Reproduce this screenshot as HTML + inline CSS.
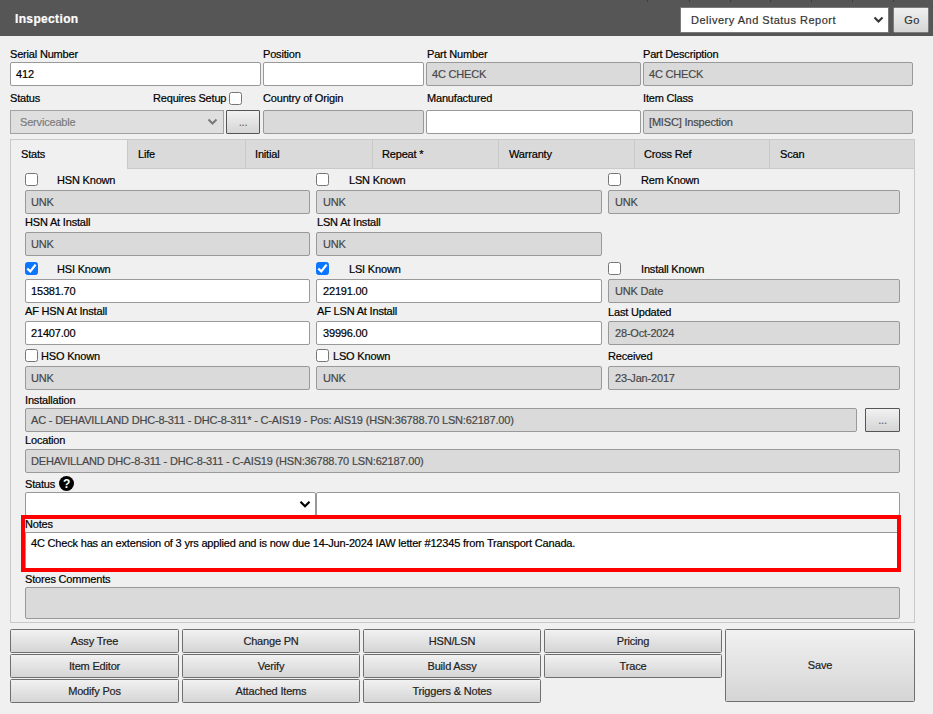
<!DOCTYPE html>
<html><head><meta charset="utf-8">
<style>
*{box-sizing:border-box;margin:0;padding:0}
html,body{-webkit-text-stroke:0.2px;width:933px;height:714px;overflow:hidden;background:#f0f0f0;font-family:"Liberation Sans",sans-serif;font-size:11px;color:#000;letter-spacing:-0.18px}
.a{position:absolute}
#hdr{left:0;top:0;width:933px;height:36px;background:#565656}
.tl{position:absolute;top:0;width:1px;height:2px;background:#3c3c3c}
.l{position:absolute;line-height:13px;white-space:pre;color:#000}
.in{position:absolute;height:24px;border:1px solid #999;border-radius:2px;background:#fff;line-height:22px;padding-left:5px;white-space:pre;color:#000;overflow:hidden}
.dis{background:#dadada;color:#474747}
.cb{position:absolute;width:13px;height:13px;border:1px solid #767676;border-radius:2.5px;background:#fff}
.cbc{background:#0a75ff;border-color:#0a75ff}
.cbc svg{position:absolute;left:0;top:0}
.tab{position:absolute;top:140px;height:28px;line-height:28px;padding-left:10px;border-left:1px solid #c9c9c9;white-space:pre}
.btn{position:absolute;height:24px;border:1px solid #6f6f6f;border-radius:1.5px;background:linear-gradient(#f1f1f1,#d5d5d5);text-align:center;line-height:22px;color:#222;white-space:pre}
</style></head><body>
<div id="hdr" class="a">
  <div class="l" style="left:15px;top:12px;font-weight:bold;font-size:12px;color:#fdfdff;letter-spacing:0.35px;line-height:15px">Inspection</div>
  <div class="tl" style="left:647px"></div><div class="tl" style="left:689px"></div><div class="tl" style="left:730px"></div><div class="tl" style="left:770px"></div><div class="tl" style="left:811px"></div><div class="tl" style="left:852px"></div><div class="tl" style="left:893px"></div>
  <div class="a" style="left:680px;top:7px;width:209px;height:26px;background:#fff;border:1px solid #7a7a7a;font-size:11px;line-height:24px;padding-left:10px;color:#333;letter-spacing:0.5px">Delivery And Status Report</div>
  <svg class="a" style="left:873px;top:16px" width="11" height="8" viewBox="0 0 11 8"><path d="M1.5 1.5 L5.5 5.5 L9.5 1.5" fill="none" stroke="#333" stroke-width="2"/></svg>
  <div class="btn" style="left:893px;top:7px;width:36px;height:26px;line-height:25px;font-size:11px;color:#333;letter-spacing:0.5px;border-color:#7d7d7d;padding-left:2px">Go</div>
</div>

<!-- row 1 -->
<div class="l" style="left:10px;top:48px">Serial Number</div>
<div class="l" style="left:263px;top:48px">Position</div>
<div class="l" style="left:427px;top:48px">Part Number</div>
<div class="l" style="left:643px;top:48px">Part Description</div>
<div class="in" style="left:10px;top:62px;width:251px">412</div>
<div class="in" style="left:263px;top:62px;width:161px"></div>
<div class="in dis" style="left:426px;top:62px;width:215px">4C CHECK</div>
<div class="in dis" style="left:643px;top:62px;width:270px">4C CHECK</div>

<!-- row 2 -->
<div class="l" style="left:10px;top:92px">Status</div>
<div class="l" style="left:153px;top:92px">Requires Setup</div>
<div class="cb" style="left:229px;top:92px"></div>
<div class="l" style="left:263px;top:92px">Country of Origin</div>
<div class="l" style="left:427px;top:92px">Manufactured</div>
<div class="l" style="left:643px;top:92px">Item Class</div>
<div class="in dis" style="left:10px;top:110px;width:214px;color:#7c7c7c;padding-left:9px;border-radius:0;background:#dfdfdf;border-color:#a3a3a3">Serviceable</div>
<svg class="a" style="left:207px;top:118px" width="11" height="8" viewBox="0 0 11 8"><path d="M1.5 1.5 L5.5 5.5 L9.5 1.5" fill="none" stroke="#777" stroke-width="2"/></svg>
<div class="btn" style="left:226px;top:110px;width:34px;color:#666;border-color:#555;border-radius:1px">...</div>
<div class="in dis" style="left:263px;top:110px;width:161px"></div>
<div class="in" style="left:426px;top:110px;width:215px"></div>
<div class="in dis" style="left:643px;top:110px;width:270px">[MISC] Inspection</div>

<!-- tabs -->
<div class="a" style="left:10px;top:139px;width:905px;height:484px;border:1px solid #c9c9c9;background:#f0f0f0"></div>
<div class="a" style="left:127px;top:140px;width:787px;height:29px;background:#dadada;border-bottom:1px solid #c9c9c9"></div>
<div class="tab" style="left:10px;border-left:none;padding-left:11px">Stats</div>
<div class="tab" style="left:127px">Life</div>
<div class="tab" style="left:245px;padding-left:9px">Initial</div>
<div class="tab" style="left:372px;padding-left:9px">Repeat *</div>
<div class="tab" style="left:498px">Warranty</div>
<div class="tab" style="left:634px;padding-left:9px">Cross Ref</div>
<div class="tab" style="left:769px">Scan</div>

<!-- content row A -->
<div class="cb" style="left:25px;top:173px"></div><div class="l" style="left:57px;top:174px">HSN Known</div>
<div class="cb" style="left:316px;top:173px"></div><div class="l" style="left:349px;top:174px">LSN Known</div>
<div class="cb" style="left:608px;top:173px"></div><div class="l" style="left:641px;top:174px">Rem Known</div>
<div class="in dis" style="left:25px;top:190px;width:285px">UNK</div>
<div class="in dis" style="left:316px;top:190px;width:286px;padding-left:6px">UNK</div>
<div class="in dis" style="left:608px;top:190px;width:292px;padding-left:6px">UNK</div>

<div class="l" style="left:25px;top:216px">HSN At Install</div>
<div class="l" style="left:317px;top:216px">LSN At Install</div>
<div class="in dis" style="left:25px;top:232px;width:285px">UNK</div>
<div class="in dis" style="left:316px;top:232px;width:286px;padding-left:6px">UNK</div>

<div class="cb cbc" style="left:25px;top:262px"><svg width="11" height="11" viewBox="0 0 11 11"><path d="M1.3 5.6 L4.3 8.4 L9.6 1.6" fill="none" stroke="#fff" stroke-width="2.3"/></svg></div><div class="l" style="left:57px;top:263px">HSI Known</div>
<div class="cb cbc" style="left:316px;top:262px"><svg width="11" height="11" viewBox="0 0 11 11"><path d="M1.3 5.6 L4.3 8.4 L9.6 1.6" fill="none" stroke="#fff" stroke-width="2.3"/></svg></div><div class="l" style="left:349px;top:263px">LSI Known</div>
<div class="cb" style="left:608px;top:262px"></div><div class="l" style="left:641px;top:263px">Install Known</div>
<div class="in" style="left:25px;top:279px;width:285px">15381.70</div>
<div class="in" style="left:316px;top:279px;width:286px;padding-left:6px">22191.00</div>
<div class="in dis" style="left:608px;top:279px;width:292px;padding-left:6px">UNK Date</div>

<div class="l" style="left:25px;top:305px">AF HSN At Install</div>
<div class="l" style="left:317px;top:305px">AF LSN At Install</div>
<div class="l" style="left:608px;top:306px">Last Updated</div>
<div class="in" style="left:25px;top:321px;width:285px">21407.00</div>
<div class="in" style="left:316px;top:321px;width:286px;padding-left:6px">39996.00</div>
<div class="in dis" style="left:608px;top:321px;width:292px;padding-left:6px">28-Oct-2024</div>

<div class="cb" style="left:25px;top:349px"></div><div class="l" style="left:41px;top:350px">HSO Known</div>
<div class="cb" style="left:316px;top:349px"></div><div class="l" style="left:333px;top:350px">LSO Known</div>
<div class="l" style="left:608px;top:350px">Received</div>
<div class="in dis" style="left:25px;top:366px;width:285px">UNK</div>
<div class="in dis" style="left:316px;top:366px;width:286px;padding-left:6px">UNK</div>
<div class="in dis" style="left:608px;top:366px;width:292px;padding-left:6px">23-Jan-2017</div>

<div class="l" style="left:25px;top:394px">Installation</div>
<div class="in dis" style="left:25px;top:408px;width:832px">AC - DEHAVILLAND DHC-8-311 - DHC-8-311* - C-AIS19 - Pos: AIS19 (HSN:36788.70 LSN:62187.00)</div>
<div class="btn" style="left:865px;top:408px;width:35px;color:#666;border-color:#555;border-radius:1px">...</div>

<div class="l" style="left:25px;top:434px">Location</div>
<div class="in dis" style="left:25px;top:449px;width:875px">DEHAVILLAND DHC-8-311 - DHC-8-311 - C-AIS19 (HSN:36788.70 LSN:62187.00)</div>

<div class="l" style="left:25px;top:478px">Status</div>
<svg class="a" style="left:59px;top:476px" width="15" height="15" viewBox="0 0 15 15"><circle cx="7.5" cy="7.5" r="7.5" fill="#000"/><text x="7.5" y="11.8" text-anchor="middle" font-family="Liberation Sans" font-weight="bold" font-size="12" fill="#fff">?</text></svg>
<div class="in" style="left:25px;top:492px;width:291px"></div>
<svg class="a" style="left:299px;top:500px" width="12" height="9" viewBox="0 0 12 9"><path d="M1.5 1.8 L6 6.3 L10.5 1.8" fill="none" stroke="#000" stroke-width="2.2"/></svg>
<div class="in" style="left:316px;top:492px;width:584px;padding-left:6px"></div>


<div class="l" style="left:25px;top:518px">Notes</div>
<div class="in" style="left:25px;top:532px;width:875px;height:36px;line-height:20px;border-radius:0;border-right:none;border-bottom:none">4C Check has an extension of 3 yrs applied and is now due 14-Jun-2024 IAW letter #12345 from Transport Canada.</div>

<div class="a" style="left:21px;top:515px;width:880px;height:57px;border:4px solid #f00;z-index:5"></div>
<div class="l" style="left:25px;top:573px">Stores Comments</div>
<div class="in dis" style="left:25px;top:587px;width:875px;height:32px"></div>

<!-- buttons -->
<div class="btn" style="left:10px;top:629px;width:169px">Assy Tree</div>
<div class="btn" style="left:182px;top:629px;width:178px">Change PN</div>
<div class="btn" style="left:363px;top:629px;width:178px">HSN/LSN</div>
<div class="btn" style="left:544px;top:629px;width:178px">Pricing</div>
<div class="btn" style="left:10px;top:654px;width:169px">Item Editor</div>
<div class="btn" style="left:182px;top:654px;width:178px">Verify</div>
<div class="btn" style="left:363px;top:654px;width:178px">Build Assy</div>
<div class="btn" style="left:544px;top:654px;width:178px">Trace</div>
<div class="btn" style="left:10px;top:679px;width:169px">Modify Pos</div>
<div class="btn" style="left:182px;top:679px;width:178px">Attached Items</div>
<div class="btn" style="left:363px;top:679px;width:178px">Triggers &amp; Notes</div>
<div class="btn" style="left:725px;top:629px;width:190px;height:73px;line-height:70px">Save</div>
</body></html>
